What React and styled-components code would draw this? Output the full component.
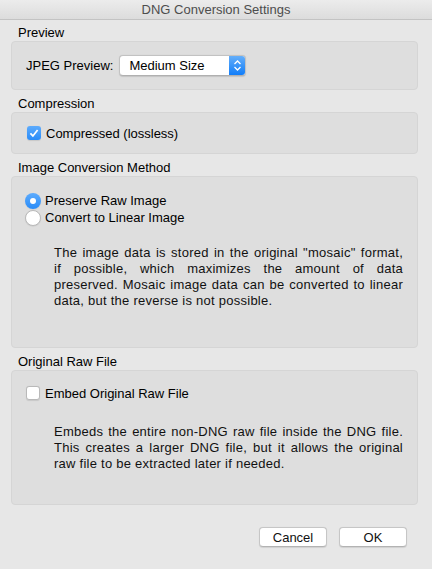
import styled, { createGlobalStyle } from 'styled-components'

const GlobalStyle = createGlobalStyle`
	html, body {
		margin: 0;
		padding: 0;
		background: #e7e7e7;
	}
	body {
		font-family: 'Liberation Sans', Arial, sans-serif;
		font-size: 13px;
		color: #000;
	}
`

const conversionText = [
	'The image data is stored in the original "mosaic" format,',
	'if possible, which maximizes the amount of data',
	'preserved. Mosaic image data can be converted to linear',
	'data, but the reverse is not possible.',
]

const embedText = [
	'Embeds the entire non-DNG raw file inside the DNG file.',
	'This creates a larger DNG file, but it allows the original',
	'raw file to be extracted later if needed.',
]

const Paragraph = ({ lines, gap }) => (
	<Description $gap={gap}>
		{lines.map((line, i) => (
			<Line key={i} $last={i === lines.length - 1}>
				{line}
			</Line>
		))}
	</Description>
)

const App = () => {
	return (
		<Window>
			<GlobalStyle />
			<TitleBar>DNG Conversion Settings</TitleBar>
			<Content>
				<SectionLabel>Preview</SectionLabel>
				<GroupBox $height={49} $center>
					<FieldLabel>JPEG Preview:</FieldLabel>
					<PopUp>
						<span>Medium Size</span>
						<Stepper>
							<svg width='17' height='21' viewBox='0 0 17 21'>
								<path d='M5.5 9 L8.5 6 L11.5 9' fill='none' stroke='#fff' strokeWidth='1.3' />
								<path d='M5.5 12 L8.5 15 L11.5 12' fill='none' stroke='#fff' strokeWidth='1.3' />
							</svg>
						</Stepper>
					</PopUp>
				</GroupBox>

				<SectionLabel>Compression</SectionLabel>
				<GroupBox $height={42} $center>
					<Option>
						<CheckBox $checked>
							<svg width='14' height='14' viewBox='0 0 14 14'>
								<path d='M3.4 7.3 L5.9 9.9 L10.6 3.9' fill='none' stroke='#fff' strokeWidth='1.7' />
							</svg>
						</CheckBox>
						Compressed (lossless)
					</Option>
				</GroupBox>

				<SectionLabel>Image Conversion Method</SectionLabel>
				<GroupBox $height={172} $top={15}>
					<Option $radio>
						<Radio $checked />
						Preserve Raw Image
					</Option>
					<Option $radio>
						<Radio />
						Convert to Linear Image
					</Option>
					<Paragraph lines={conversionText} gap={19} />
				</GroupBox>

				<SectionLabel>Original Raw File</SectionLabel>
				<GroupBox $height={135} $top={14}>
					<Option>
						<CheckBox />
						Embed Original Raw File
					</Option>
					<Paragraph lines={embedText} gap={23} />
				</GroupBox>

				<ButtonRow>
					<Button>Cancel</Button>
					<Button>OK</Button>
				</ButtonRow>
			</Content>
		</Window>
	)
}
export default App

const Window = styled.div`
	width: 432px;
	height: 569px;
	background: #e7e7e7;
	display: flex;
	flex-direction: column;
`

const TitleBar = styled.div`
	height: 19px;
	border-bottom: 1px solid #c3c3c3;
	background: linear-gradient(#ececec, #dcdcdc);
	display: flex;
	align-items: center;
	justify-content: center;
	color: #4d4d4d;
	font-size: 13px;
`

const Content = styled.div`
	display: flex;
	flex-direction: column;
	padding: 5px 14px 0 11px;
`

const SectionLabel = styled.div`
	height: 16px;
	line-height: 16px;
	padding-left: 7px;
	margin-top: 6px;
	&:first-child {
		margin-top: 0;
	}
`

const GroupBox = styled.div`
	box-sizing: border-box;
	height: ${(p) => p.$height}px;
	background: #dedede;
	border: 1px solid #d5d5d5;
	border-radius: 4px;
	display: flex;
	flex-direction: ${(p) => (p.$center ? 'row' : 'column')};
	align-items: ${(p) => (p.$center ? 'center' : 'stretch')};
	padding: ${(p) => (p.$center ? '0 14px 0 14px' : `${p.$top}px 14px 0 13px`)};
`

const FieldLabel = styled.span`
	margin-right: 6px;
`

const PopUp = styled.div`
	box-sizing: border-box;
	width: 127px;
	height: 21px;
	background: #fff;
	border: 1px solid #c2c2c2;
	border-bottom-color: #b0b0b0;
	border-radius: 4px;
	box-shadow: 0 0.5px 1px rgba(0, 0, 0, 0.12);
	display: flex;
	align-items: center;
	justify-content: space-between;
	overflow: hidden;
	span {
		padding-left: 9px;
	}
`

const Stepper = styled.div`
	width: 17px;
	height: 21px;
	margin-right: -1px;
	background: linear-gradient(#69b1fa, #0d7bf9);
	display: flex;
	svg {
		display: block;
	}
`

const Option = styled.div`
	display: flex;
	align-items: center;
	height: ${(p) => (p.$radio ? 17 : 16)}px;
	padding-left: ${(p) => (p.$radio ? 0 : 1)}px;
	gap: ${(p) => (p.$radio ? 4 : 5)}px;
`

const CheckBox = styled.div`
	box-sizing: border-box;
	width: 14px;
	height: 14px;
	border-radius: 3px;
	background: ${(p) => (p.$checked ? 'linear-gradient(#5cabfd, #2a8cf8)' : '#fff')};
	border: ${(p) => (p.$checked ? 'none' : '1px solid #b9b9b9')};
	box-shadow: 0 0.5px 1px rgba(0, 0, 0, 0.1);
	display: flex;
	svg {
		display: block;
	}
`

const Radio = styled.div`
	box-sizing: border-box;
	width: 16px;
	height: 16px;
	border-radius: 50%;
	position: relative;
	background: ${(p) => (p.$checked ? 'linear-gradient(#5cabfd, #2a8cf8)' : '#fff')};
	border: ${(p) => (p.$checked ? 'none' : '1px solid #b9b9b9')};
	box-shadow: 0 0.5px 1px rgba(0, 0, 0, 0.1);
	&::after {
		content: '';
		display: ${(p) => (p.$checked ? 'block' : 'none')};
		position: absolute;
		left: 5px;
		top: 5px;
		width: 6px;
		height: 6px;
		border-radius: 50%;
		background: #fff;
	}
`

const Description = styled.div`
	margin: ${(p) => p.$gap}px 0 0 29px;
	line-height: 16px;
	letter-spacing: 0.25px;
	color: #111;
`

const Line = styled.div`
	white-space: nowrap;
	text-align: justify;
	text-align-last: ${(p) => (p.$last ? 'left' : 'justify')};
`

const ButtonRow = styled.div`
	display: flex;
	justify-content: flex-end;
	gap: 12px;
	margin-top: 22px;
	padding-right: 11px;
`

const Button = styled.button`
	box-sizing: border-box;
	width: 68px;
	height: 20px;
	padding: 0;
	background: #fff;
	border: 1px solid #c6c6c6;
	border-bottom-color: #b3b3b3;
	border-radius: 4px;
	box-shadow: 0 0.5px 1px rgba(0, 0, 0, 0.1);
	font-family: 'Liberation Sans', Arial, sans-serif;
	font-size: 13px;
	color: #111;
`
